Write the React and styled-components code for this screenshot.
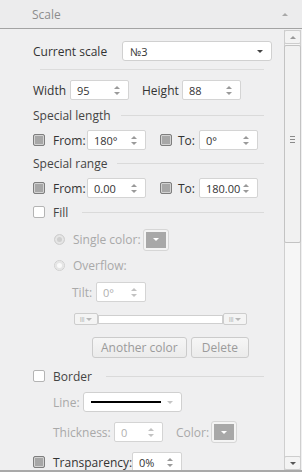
import styled, { createGlobalStyle } from "styled-components";

// ==================== Global ====================
const GlobalStyle = createGlobalStyle`
  html, body {
    margin: 0;
    padding: 0;
    background: #efeff0;
  }
  body {
    font-family: "Open Sans", "Noto Sans", sans-serif;
    font-size: 11px;
  }
`;

// ==================== Panel ====================
const Panel = styled.div`
  width: 302px;
  height: 472px;
  display: flex;
  flex-direction: column;
  background: #efeff0;
  overflow: hidden;
  box-sizing: border-box;
`;

const Header = styled.div`
  height: 28px;
  flex: none;
  display: flex;
  align-items: center;
  justify-content: space-between;
  padding: 0 14px 0 32px;
  background: #ececed;
  border-bottom: 1px solid #a3a3a3;
  color: #8d8d8d;
  font-size: 12px;
`;

const Caret = styled.span`
  width: 0;
  height: 0;
  border-left: 3px solid transparent;
  border-right: 3px solid transparent;
  ${({ down, color = "#a8a8a8" }) =>
    down
      ? `border-top: 3px solid ${color};`
      : `border-bottom: 3px solid ${color};`}
`;

const Body = styled.div`
  flex: none;
  height: 441px;
  display: flex;
  border-bottom: 2px solid #a9a9a9;
`;

const Content = styled.div`
  flex: 1;
  padding-left: 33px;
  overflow: hidden;
  display: flex;
  flex-direction: column;
`;

// ==================== Scrollbar ====================
const Scrollbar = styled.div`
  width: 15px;
  margin: 1px 1px 0 0;
  display: flex;
  flex-direction: column;
  background: #f6f6f6;
  border-left: 1px solid #cfcfcf;
  border-right: 1px solid #cfcfcf;
`;

const ScrollButton = styled.div`
  height: 14px;
  flex: none;
  display: flex;
  align-items: center;
  justify-content: center;
  background: #f3f3f3;
  border: 1px solid #cdcdcd;
  margin: 0 -1px;
  box-sizing: border-box;
  border-radius: 2px;
`;

const Thumb = styled.div`
  height: 198px;
  margin: 1px -1px 0;
  flex: none;
  display: flex;
  flex-direction: column;
  align-items: center;
  justify-content: center;
  gap: 2px;
  background: #f1f1f1;
  border: 1px solid #c3c3c3;
  border-radius: 2px;
  box-sizing: border-box;
  padding-bottom: 10px;
`;

const Grip = styled.span`
  width: 5px;
  height: 1px;
  background: #8a8a8a;
`;

const Track = styled.div`
  flex: 1;
`;

// ==================== Rows ====================
const Row = styled.div`
  display: flex;
  align-items: center;
  flex: none;
  height: ${({ h = 20 }) => h}px;
  margin-top: ${({ top = 0 }) => top}px;
  padding-left: ${({ indent = 0 }) => indent}px;
`;

const Label = styled.span`
  display: inline-block;
  width: ${({ w }) => (w ? `${w}px` : "auto")};
  flex: none;
  font-size: 12px;
  color: ${({ disabled }) => (disabled ? "#a9a9a9" : "#333")};
  white-space: nowrap;
  margin-left: ${({ left = 0 }) => left}px;
`;

const Section = styled.span`
  color: #444;
  font-size: 12px;
  white-space: nowrap;
  margin-left: ${({ left = 0 }) => left}px;
`;

const Rule = styled.span`
  flex: 1;
  height: 1px;
  background: #dadada;
  margin: 0 ${({ right = 20 }) => right}px 0 ${({ left = 10 }) => left}px;
`;

const Separator = styled.div`
  height: 1px;
  flex: none;
  background: #dcdcdc;
  margin: ${({ top = 0 }) => top}px 20px 0 7px;
`;

// ==================== Inputs ====================
const Select = styled.div`
  width: ${({ w }) => w}px;
  height: 20px;
  box-sizing: border-box;
  display: flex;
  align-items: center;
  justify-content: space-between;
  padding: 0 8px 0 7px;
  background: #fff;
  border: 1px solid #d0d0d0;
  border-radius: 3px;
  color: #333;
  margin-left: ${({ left = 0 }) => left}px;
`;

const Spin = styled.div`
  width: ${({ w }) => w}px;
  height: 20px;
  box-sizing: border-box;
  display: flex;
  align-items: center;
  justify-content: space-between;
  padding: 0 8px 0 6px;
  background: #fff;
  border: 1px solid #d4d4d4;
  border-radius: 2px;
  color: ${({ disabled }) => (disabled ? "#b0b0b0" : "#333")};
  margin-left: ${({ left = 0 }) => left}px;
  flex: none;
`;

const Arrows = styled.span`
  display: flex;
  flex-direction: column;
  gap: 3px;
  opacity: ${({ disabled }) => (disabled ? 0.6 : 1)};
`;

const Spinner = ({ w, value, left, disabled }) => (
  <Spin w={w} left={left} disabled={disabled}>
    <span>{value}</span>
    <Arrows disabled={disabled}>
      <Caret color="#9a9a9a" />
      <Caret down color="#9a9a9a" />
    </Arrows>
  </Spin>
);

const Check = styled.span`
  width: 10px;
  height: 10px;
  flex: none;
  border-radius: 2px;
  margin-left: ${({ left = 0 }) => left}px;
  ${({ gray }) =>
    gray
      ? `background: #a7a7a7; border: 1px solid #7e7e7e; box-shadow: inset 0 0 0 1px #d2d2d2;`
      : `background: #fff; border: 1px solid #b4b4b4;`}
`;

const Radio = styled.span`
  width: 9px;
  height: 9px;
  flex: none;
  border-radius: 50%;
  border: 1px solid #d0d0d0;
  background: ${({ on }) => (on ? "#cfcfcf" : "#fafafa")};
  box-shadow: inset 0 0 0 2px #e6e6e6;
`;

const ColorButton = styled.div`
  width: 24px;
  height: 20px;
  box-sizing: border-box;
  flex: none;
  display: flex;
  align-items: center;
  justify-content: center;
  background: #a8a8a8;
  border: 2px solid #f4f4f4;
  outline: 1px solid #d6d6d6;
  border-radius: 2px;
  margin-left: ${({ left = 0 }) => left}px;
`;

// ==================== Gradient slider ====================
const Handle = styled.div`
  width: 24px;
  height: 12px;
  box-sizing: border-box;
  flex: none;
  display: flex;
  align-items: center;
  justify-content: center;
  gap: 2px;
  background: #f4f4f4;
  border: 1px solid #cdcdcd;
  border-radius: 2px;
  color: #b0b0b0;
  font-size: 7px;
  letter-spacing: -0.5px;
`;

const Bar = styled.div`
  flex: none;
  width: 125px;
  height: 9px;
  box-sizing: border-box;
  background: #fff;
  border: 1px solid #cfcfcf;
`;

// ==================== Buttons ====================
const Button = styled.div`
  height: 21px;
  box-sizing: border-box;
  padding: 0 ${({ pad = 10 }) => pad}px;
  display: flex;
  align-items: center;
  background: linear-gradient(#f6f6f6, #ebebeb);
  border: 1px solid #cbcbcb;
  border-radius: 3px;
  color: #9b9b9b;
  font-size: 12px;
  margin-left: ${({ left = 0 }) => left}px;
`;

const LineSample = styled.span`
  width: 70px;
  height: 2px;
  background: #000;
`;

// ==================== App ====================
export default function App() {
  return (
    <>
      <GlobalStyle />
      <Panel>
        <Header>
          <span>Scale</span>
          <Caret />
        </Header>
        <Body>
          <Content>
            <Row top={12}>
              <Label w={89}>Current scale</Label>
              <Select w={150}>
                <span>№3</span>
                <Caret down color="#444" />
              </Select>
            </Row>
            <Separator top={8} />

            <Row top={10}>
              <Label w={37}>Width</Label>
              <Spinner w={59} value="95" />
              <Label w={40} left={13}>
                Height
              </Label>
              <Spinner w={59} value="88" />
            </Row>

            <Row top={7} h={16}>
              <Section>Special length</Section>
              <Rule />
            </Row>
            <Row top={7}>
              <Check gray />
              <Label w={34} left={8}>
                From:
              </Label>
              <Spinner w={59} value="180°" />
              <Check gray left={14} />
              <Label w={21} left={6}>
                To:
              </Label>
              <Spinner w={59} value="0°" />
            </Row>

            <Row top={5} h={16}>
              <Section>Special range</Section>
              <Rule />
            </Row>
            <Row top={7}>
              <Check gray />
              <Label w={34} left={8}>
                From:
              </Label>
              <Spinner w={59} value="0.00" />
              <Check gray left={14} />
              <Label w={21} left={6}>
                To:
              </Label>
              <Spinner w={59} value="180.00" />
            </Row>

            <Row top={6} h={16}>
              <Check />
              <Section left={8}>Fill</Section>
              <Rule left={14} />
            </Row>

            <Row top={9} h={21} indent={21}>
              <Radio on />
              <Label disabled left={8}>
                Single color:
              </Label>
              <ColorButton left={3}>
                <Caret down color="#fff" />
              </ColorButton>
            </Row>
            <Row top={7} h={16} indent={21}>
              <Radio />
              <Label disabled left={8}>
                Overflow:
              </Label>
            </Row>
            <Row top={9} indent={39}>
              <Label disabled w={24}>
                Tilt:
              </Label>
              <Spinner w={50} value="0°" disabled />
            </Row>

            <Row top={11} h={12} indent={41}>
              <Handle>
                <span>III</span>
                <Caret down color="#b8b8b8" />
              </Handle>
              <Bar />
              <Handle>
                <span>III</span>
                <Caret down color="#b8b8b8" />
              </Handle>
            </Row>

            <Row top={12} h={21} indent={59}>
              <Button pad={8}>Another color</Button>
              <Button left={4} pad={10}>
                Delete
              </Button>
            </Row>

            <Row top={10} h={16}>
              <Check />
              <Section left={8}>Border</Section>
              <Rule left={14} />
            </Row>

            <Row top={8} indent={20}>
              <Label disabled w={30}>
                Line:
              </Label>
              <Select w={99}>
                <LineSample />
                <Caret down color="#c4c4c4" />
              </Select>
            </Row>
            <Row top={10} indent={20}>
              <Label disabled w={61}>
                Thickness:
              </Label>
              <Spinner w={49} value="0" disabled />
              <Label disabled w={36} left={13}>
                Color:
              </Label>
              <ColorButton>
                <Caret down color="#fff" />
              </ColorButton>
            </Row>
            <Row top={10}>
              <Check gray />
              <Label w={79} left={8}>
                Transparency:
              </Label>
              <Spinner w={50} value="0%" />
            </Row>
          </Content>
          <Scrollbar>
            <ScrollButton>
              <Caret color="#9a9a9a" />
            </ScrollButton>
            <Thumb>
              <Grip />
              <Grip />
              <Grip />
            </Thumb>
            <Track />
            <ScrollButton>
              <Caret down color="#555" />
            </ScrollButton>
          </Scrollbar>
        </Body>
      </Panel>
    </>
  );
}
